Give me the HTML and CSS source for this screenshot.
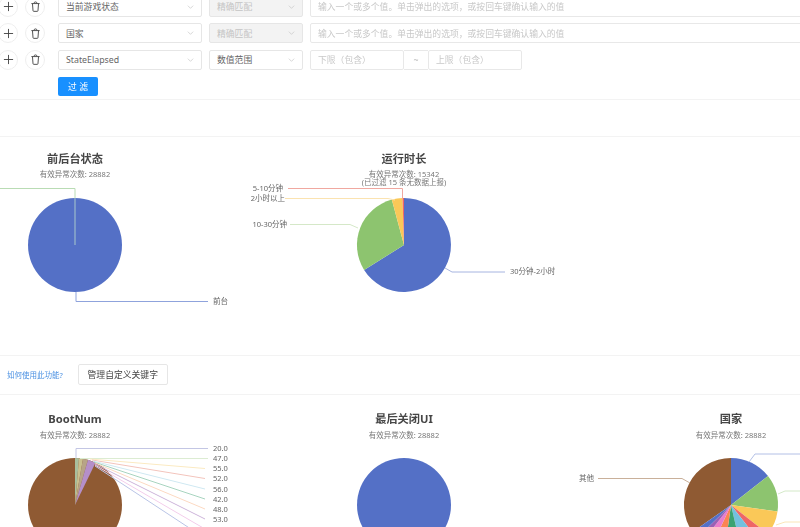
FILE: index.html
```html
<!DOCTYPE html>
<html lang="zh-CN">
<head>
<meta charset="utf-8">
<title>异常统计</title>
<link rel="stylesheet" href="styles.css">
</head>
<body>
<main class="page">
  <section class="filters">
    <div class="row">
      <button class="round"><svg viewBox="0 0 12 12" class="ico"><path d="M6 1v10M1 6h10"/></svg></button>
      <button class="round"><svg viewBox="0 0 12 12" class="ico"><path d="M1.5 2.8h9M4.3 2.5c0-2 3.400-2 3.400 0M2.700 3l.6 7.500c0 .5.300.8.800.8h3.800c.5 0 .8-.3.800-.8l.6-7.500"/></svg></button>
      <div class="select key"><span>当前游戏状态</span><svg viewBox="0 0 10 6" class="chev"><path d="M1 1l4 4 4-4"/></svg></div>
      <div class="select mode off"><span>精确匹配</span><svg viewBox="0 0 10 6" class="chev"><path d="M1 1l4 4 4-4"/></svg></div>
      <div class="input wide">输入一个或多个值。单击弹出的选项，或按回车键确认输入的值</div>
    </div>
    <div class="row">
      <button class="round"><svg viewBox="0 0 12 12" class="ico"><path d="M6 1v10M1 6h10"/></svg></button>
      <button class="round"><svg viewBox="0 0 12 12" class="ico"><path d="M1.5 2.8h9M4.3 2.500c0-2 3.400-2 3.400 0M2.700 3l.6 7.500c0 .5.300.8.800.8h3.800c.5 0 .8-.3.800-.8l.6-7.500"/></svg></button>
      <div class="select key"><span>国家</span><svg viewBox="0 0 10 6" class="chev"><path d="M1 1l4 4 4-4"/></svg></div>
      <div class="select mode off"><span>精确匹配</span><svg viewBox="0 0 10 6" class="chev"><path d="M1 1l4 4 4-4"/></svg></div>
      <div class="input wide">输入一个或多个值。单击弹出的选项，或按回车键确认输入的值</div>
    </div>
    <div class="row">
      <button class="round"><svg viewBox="0 0 12 12" class="ico"><path d="M6 1v10M1 6h10"/></svg></button>
      <button class="round"><svg viewBox="0 0 12 12" class="ico"><path d="M1.5 2.8h9M4.300 2.500c0-2 3.400-2 3.400 0M2.700 3l.6 7.500c0 .5.300.8.800.8h3.800c.5 0 .8-.3.800-.8l.6-7.500"/></svg></button>
      <div class="select key"><span>StateElapsed</span><svg viewBox="0 0 10 6" class="chev"><path d="M1 1l4 4 4-4"/></svg></div>
      <div class="select mode"><span>数值范围</span><svg viewBox="0 0 10 6" class="chev"><path d="M1 1l4 4 4-4"/></svg></div>
      <div class="range">
        <div class="input bound">下限（包含）</div>
        <div class="tilde">~</div>
        <div class="input bound">上限（包含）</div>
      </div>
    </div>
    <button class="primary">过 滤</button>
  </section>

  <div class="band"></div>

  <section class="charts">
    <svg class="chart" viewBox="-89 137 328 218">
      <text class="title" x="75" y="163">前后台状态</text>
      <text class="sub" x="75" y="177">有效异常次数: 28882</text>
      <circle cx="75" cy="245" r="47" fill="#5470c6"/>
      <path class="lead" stroke="#b9dcb4" d="M-5 188.500H75V198"/>
      <path class="lead" stroke="#a8c8cc" d="M75 198V245"/>
      <path class="lead" stroke="#8fa3dc" d="M76 292V301.500H208"/>
      <text class="label" x="213" y="304">前台</text>
    </svg>
    <svg class="chart" viewBox="239 137 328 218">
      <text class="title" x="404" y="163">运行时长</text>
      <text class="sub"><tspan x="404" y="177">有效异常次数: 15342</tspan><tspan x="404" y="185">(已过滤 15 条无数据上报)</tspan></text>
      <path fill="#5470c6" d="M404 245V198A47 47 0 1 1 364.100 269.900Z"/>
      <path fill="#8dc46f" d="M404 245L364.100 269.900A47 47 0 0 1 391.800 199.600Z"/>
      <path fill="#fac858" d="M404 245L391.800 199.600A47 47 0 0 1 402.500 198Z"/>
      <path fill="#ee6666" d="M404 245L402.500 198A47 47 0 0 1 404 198Z"/>
      <path class="lead" stroke="#f0a8a0" d="M288 188.500H402.500V198"/>
      <path class="lead" stroke="#fbe3b0" d="M285 198.500H388L395 200"/>
      <path class="lead" stroke="#d5e8c8" d="M290 224.500H350L358 228"/>
      <path class="lead" stroke="#a6b4e0" d="M445 268L452 272H505"/>
      <text class="label end" x="283" y="190.500">5-10分钟</text>
      <text class="label end" x="285" y="200.500">2小时以上</text>
      <text class="label end" x="287" y="226.500">10-30分钟</text>
      <text class="label" x="510" y="273.500">30分钟-2小时</text>
    </svg>
  </section>

  <section class="toolbar">
    <a class="help">如何使用此功能?</a>
    <button class="manage">管理自定义关键字</button>
  </section>

  <section class="charts low">
    <svg class="chart" viewBox="-89 395 328 218">
      <text class="title" x="75" y="423">BootNum</text>
      <text class="sub" x="75" y="438">有效异常次数: 28882</text>
      <circle cx="75" cy="505" r="47" fill="#8f5a33"/>
      <path fill="#a9bf9d" d="M75 505V458L79 458.200Z"/>
      <path fill="#c9c08f" d="M75 505L79 458.200L83 458.700Z"/>
      <path fill="#b7a487" d="M75 505L83 458.700L88 459.800Z"/>
      <path fill="#b58fc9" d="M75 505L88 459.800L95.500 462.700Z"/>
      <g class="fan">
        <path stroke="#c3c6e4" stroke-width="1.300" d="M76 458V448.500H208"/>
        <path stroke="#dcecd2" d="M80 458.500H208"/>
        <path stroke="#fbeac2" d="M90 459L205 468.500"/>
        <path stroke="#f3c4bc" d="M92 460L205 478.500"/>
        <path stroke="#cfe8f2" d="M93 461L205 489"/>
        <path stroke="#a7d4bf" d="M94 462L205 499"/>
        <path stroke="#fcd9c2" d="M95 463L205 509"/>
        <path stroke="#cdb4da" d="M95 464L205 519"/>
        <path stroke="#f3cdeb" d="M95 465L205 529"/>
        <path stroke="#b9c4e6" d="M95 466L200 535"/>
      </g>
      <text class="label" x="213" y="451">20.0</text>
      <text class="label" x="213" y="461">47.0</text>
      <text class="label" x="213" y="471">55.0</text>
      <text class="label" x="213" y="481">52.0</text>
      <text class="label" x="213" y="491.500">56.0</text>
      <text class="label" x="213" y="501.500">42.0</text>
      <text class="label" x="213" y="511.500">48.0</text>
      <text class="label" x="213" y="521.500">53.0</text>
      <text class="label" x="213" y="531.500">54.0</text>
    </svg>
    <svg class="chart" viewBox="239 395 328 218">
      <text class="title" x="404" y="423">最后关闭UI</text>
      <text class="sub" x="404" y="438">有效异常次数: 28882</text>
      <circle cx="404" cy="505" r="47" fill="#5470c6"/>
    </svg>
    <svg class="chart" viewBox="567 395 328 218">
      <text class="title" x="731" y="423">国家</text>
      <text class="sub" x="731" y="438">有效异常次数: 28882</text>
      <path fill="#8f5a33" d="M731 505L692.500 532A47 47 0 0 1 731 458Z"/>
      <path fill="#5470c6" d="M731 505V458A47 47 0 0 1 768 476.100Z"/>
      <path fill="#8dc46f" d="M731 505L768 476.100A47 47 0 0 1 777.500 511.500Z"/>
      <path fill="#fac858" d="M731 505L777.500 511.500A47 47 0 0 1 768 533.900Z"/>
      <path fill="#ee6666" d="M731 505L768 533.900A47 47 0 0 1 759.900 542Z"/>
      <path fill="#73c0de" d="M731 505L759.900 542A47 47 0 0 1 741.600 550.800Z"/>
      <path fill="#3ba272" d="M731 505L741.600 550.800A47 47 0 0 1 724.500 551.500Z"/>
      <path fill="#fc8452" d="M731 505L724.500 551.500A47 47 0 0 1 711.100 547.600Z"/>
      <path fill="#ea7ccc" d="M731 505L711.100 547.600A47 47 0 0 1 702.100 542Z"/>
      <path fill="#9a60b4" d="M731 505L702.100 542A47 47 0 0 1 697.200 537.700Z"/>
      <path fill="#5470c6" d="M731 505L697.200 537.700A47 47 0 0 1 692.500 532Z"/>
      <path class="lead" stroke="#c9b09a" d="M598 478.500H682L690 483"/>
      <path class="lead" stroke="#b3c0e6" d="M749 462L755 454H810"/>
      <path class="lead" stroke="#d4e9c8" d="M778 494L785 491H810"/>
      <path class="lead" stroke="#fbe6b8" d="M776 525L785 522H810"/>
      <text class="label end" x="594" y="481">其他</text>
    </svg>
  </section>
</main>
</body>
</html>
```

FILE: styles.css
```css
html, body {
  margin: 0;
  height: 527px;
  overflow: hidden;
  background: #fff;
}

body {
  font-family: "Noto Sans", "Noto Sans CJK SC", sans-serif;
  color: #555;
}

.page {
  margin-top: -3.5px;
  filter: blur(0.5px);
}

button {
  font-family: inherit;
  padding: 0;
  cursor: pointer;
}

.filters {
  display: flex;
  flex-direction: column;
  gap: 6.5px;
  height: 102px;
  border-bottom: 1px solid #f3f3f3;
  box-sizing: content-box;
}

.row {
  display: flex;
  align-items: center;
  height: 20px;
}

.round {
  flex: none;
  width: 20px;
  height: 20px;
  border: 1px solid #eee;
  border-radius: 50%;
  background: #fff;
  display: flex;
  align-items: center;
  justify-content: center;
}

.round:first-child {
  margin-left: -2px;
  margin-right: 7px;
}

.round + .round {
  margin-right: 13px;
}

.ico {
  width: 11px;
  height: 11px;
  fill: none;
  stroke: #444;
  stroke-width: 1;
}

.select {
  flex: none;
  box-sizing: border-box;
  height: 20px;
  display: flex;
  align-items: center;
  justify-content: space-between;
  padding: 0 7px;
  border: 1px solid #e6e6e6;
  border-radius: 2px;
  font-size: 8.8px;
  color: #666;
  background: #fff;
}

.key {
  width: 144px;
}

.mode {
  width: 94px;
  margin-left: 7px;
}

.off {
  background: #f3f3f3;
  color: #c4c4c4;
}

.chev {
  width: 7px;
  height: 4px;
  fill: none;
  stroke: #c4c4c4;
  stroke-width: 1;
}

.input {
  box-sizing: border-box;
  height: 20px;
  display: flex;
  align-items: center;
  padding: 0 7px;
  border: 1px solid #e8e8e8;
  border-radius: 2px;
  font-size: 8.8px;
  color: #c8c8c8;
  white-space: nowrap;
}

.wide {
  flex: 1;
  min-width: 0;
  margin-left: 7px;
  margin-right: -3px;
}

.range {
  display: flex;
  margin-left: 7px;
}

.bound {
  width: 94px;
}

.tilde {
  width: 24px;
  height: 20px;
  box-sizing: border-box;
  border-top: 1px solid #e8e8e8;
  border-bottom: 1px solid #e8e8e8;
  display: flex;
  align-items: center;
  justify-content: center;
  font-size: 8.8px;
  color: #bbb;
}

.primary {
  width: 40px;
  height: 19px;
  margin: 0.5px 0 0 58px;
  border: 0;
  border-radius: 2px;
  background: #1890ff;
  color: #fff;
  font-size: 8.8px;
}

.band {
  height: 36px;
  border-bottom: 1px solid #f3f3f3;
}

.charts {
  display: flex;
  margin-left: -89px;
  width: 1000px;
  height: 218px;
}

.low {
  height: 140px;
}

.chart {
  flex: none;
  display: block;
  width: 328px;
  height: 218px;
}

.title {
  font-size: 11.2px;
  font-weight: 700;
  fill: #464646;
  text-anchor: middle;
}

.sub {
  font-size: 7.5px;
  fill: #777;
  text-anchor: middle;
}

.label {
  font-size: 7.5px;
  fill: #666;
}

.end {
  text-anchor: end;
}

.lead {
  fill: none;
  stroke-width: 1;
}

.fan path {
  fill: none;
  stroke-width: 1;
}

.toolbar {
  display: flex;
  align-items: center;
  height: 38px;
  padding-left: 7px;
  border-top: 1px solid #f3f3f3;
  border-bottom: 1px solid #f3f3f3;
}

.help {
  font-size: 7.5px;
  color: #4a90e2;
}

.manage {
  box-sizing: border-box;
  width: 90px;
  height: 21px;
  margin-left: 15px;
  border: 1px solid #e6e6e6;
  border-radius: 2px;
  background: #fff;
  color: #444;
  font-size: 8.8px;
}
```
